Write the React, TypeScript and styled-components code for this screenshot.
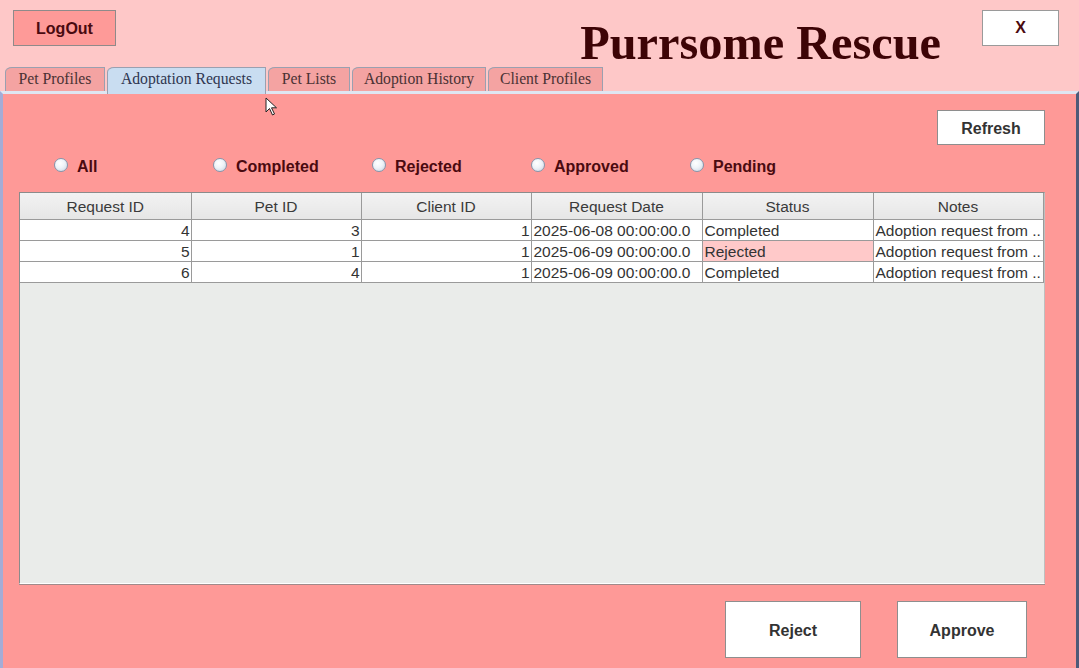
import React from "react";
import styled, { createGlobalStyle } from "styled-components";

const Global = createGlobalStyle`
  html, body { margin: 0; padding: 0; }
  body { width: 1079px; height: 668px; overflow: hidden; background: #fec8c8; font-family: "Liberation Sans", Arial, sans-serif; }
  #root { width: 1079px; height: 668px; }
`;

const Frame = styled.div`
  position: relative;
  width: 1079px;
  height: 668px;
  display: flex;
  flex-direction: column;
  background: #fec8c8;
`;

const Header = styled.div`
  height: 67px;
  box-sizing: border-box;
  display: flex;
  align-items: flex-start;
  padding: 10px 20px 0 13px;
`;

const LogOutButton = styled.button`
  width: 103px;
  height: 36px;
  background: #fe9a98;
  border: 1px solid #8f8a8a;
  font: bold 16px "Liberation Sans", Arial, sans-serif;
  color: #4a0a10;
  padding: 2px 0 0 0;
`;

const Title = styled.h1`
  margin: 7px 41px 0 auto;
  font: bold 48.3px/52px "Liberation Serif", "Times New Roman", serif;
  color: #3d0406;
  white-space: nowrap;
`;

const CloseButton = styled.button`
  width: 77px;
  height: 36px;
  background: #ffffff;
  border: 1px solid #9a9a9a;
  font: bold 16px "Liberation Sans", Arial, sans-serif;
  color: #4a0a10;
  padding: 0;
`;

const TabStrip = styled.div`
  height: 24px;
  display: flex;
  align-items: flex-end;
  gap: 2px;
  padding-left: 5px;
`;

const Tab = styled.div<{ $active?: boolean; $w: number }>`
  width: ${(p) => p.$w}px;
  height: ${(p) => (p.$active ? 27 : 24)}px;
  margin-bottom: ${(p) => (p.$active ? -3 : 0)}px;
  box-sizing: border-box;
  background: ${(p) => (p.$active ? "#c9ddf1" : "#f4a3a2")};
  border: 1px solid #9aa0b0;
  border-bottom: none;
  border-top-left-radius: 7px 5px;
  display: flex;
  align-items: flex-start;
  justify-content: center;
  padding-top: 2px;
  font: 15.7px "Liberation Serif", "Times New Roman", serif;
  color: ${(p) => (p.$active ? "#2f3650" : "#4a3234")};
  white-space: nowrap;
  position: relative;
  z-index: ${(p) => (p.$active ? 2 : 1)};
`;

const Panel = styled.div`
  flex: 1;
  display: flex;
  flex-direction: column;
  background: #fe9997;
  border-top: 3px solid #dfe6f2;
  border-left: 3px solid #a4acd6;
  border-right: 3px solid #4e5a78;
  padding: 16px 31px 0 16px;
`;

const TopRow = styled.div`
  display: flex;
  justify-content: flex-end;
`;

const WhiteButton = styled.button<{ $w: number; $h: number }>`
  width: ${(p) => p.$w}px;
  height: ${(p) => p.$h}px;
  background: #ffffff;
  border: 1px solid #8e8e8e;
  font: bold 16px "Liberation Sans", Arial, sans-serif;
  color: #333333;
  padding: 2px 0 0 0;
`;

const RadioRow = styled.div`
  display: flex;
  height: 20px;
  margin: 12px 0 15px 0;
  padding-left: 35px;
  align-items: center;
`;

const RadioItem = styled.label`
  width: 159px;
  display: flex;
  align-items: center;
  gap: 9px;
  font: bold 16px "Liberation Sans", Arial, sans-serif;
  color: #4a0a10;
`;

const RadioDot = styled.span`
  width: 14px;
  height: 14px;
  box-sizing: border-box;
  border-radius: 50%;
  border: 1px solid #8596ac;
  background: radial-gradient(circle at 40% 35%, #ffffff 0%, #eef3f8 45%, #c5d2e0 100%);
  margin-top: -4px;
`;

const TableBox = styled.div`
  height: 392px;
  box-sizing: border-box;
  background: #eaecea;
  border: 1px solid #8b8b8b;
  border-right-color: #bfbfbf;
  border-bottom-color: #ffffff;
  box-shadow: 0 1px 0 #a08a8a;
  overflow: hidden;
`;

const Grid = styled.table`
  width: 1023px;
  border-collapse: collapse;
  table-layout: fixed;
  font: 15.5px "Liberation Sans", Arial, sans-serif;
  color: #333333;
`;

const Th = styled.th`
  height: 25px;
  padding: 1px 0 0 0;
  font-weight: normal;
  text-align: center;
  background: linear-gradient(#f2f2f2, #e6e6e6);
  border-right: 1px solid #9a9a9a;
  border-bottom: 1px solid #9a9a9a;
  color: #3a3a3a;
`;

const Td = styled.td<{ $align?: string; $hl?: boolean }>`
  height: 18px;
  padding: 2px 1px 0 2px;
  background: ${(p) => (p.$hl ? "#ffc9c9" : "#ffffff")};
  border-right: 1px solid #9a9a9a;
  border-bottom: 1px solid #9a9a9a;
  text-align: ${(p) => p.$align || "left"};
  white-space: nowrap;
  overflow: hidden;
  line-height: 18px;
`;

const BottomRow = styled.div`
  display: flex;
  justify-content: flex-end;
  gap: 36px;
  margin: 17px 18px 0 0;
`;

const Cursor = styled.svg`
  position: absolute;
  left: 265px;
  top: 97px;
`;

const rows = [
  { id: 4, pet: 3, client: 1, date: "2025-06-08 00:00:00.0", status: "Completed" },
  { id: 5, pet: 1, client: 1, date: "2025-06-09 00:00:00.0", status: "Rejected" },
  { id: 6, pet: 4, client: 1, date: "2025-06-09 00:00:00.0", status: "Completed" },
];

const tabs = [
  { label: "Pet Profiles", w: 100 },
  { label: "Adoptation Requests", w: 159, active: true },
  { label: "Pet Lists", w: 82 },
  { label: "Adoption History", w: 134 },
  { label: "Client Profiles", w: 115 },
];

const radios = ["All", "Completed", "Rejected", "Approved", "Pending"];
const cols = ["Request ID", "Pet ID", "Client ID", "Request Date", "Status", "Notes"];

export default function App() {
  return (
    <Frame>
      <Global />
      <Header>
        <LogOutButton>LogOut</LogOutButton>
        <Title>Purrsome Rescue</Title>
        <CloseButton>X</CloseButton>
      </Header>
      <TabStrip>
        {tabs.map((t) => (
          <Tab key={t.label} $w={t.w} $active={t.active}>
            {t.label}
          </Tab>
        ))}
      </TabStrip>
      <Panel>
        <TopRow>
          <WhiteButton $w={108} $h={35}>Refresh</WhiteButton>
        </TopRow>
        <RadioRow>
          {radios.map((r) => (
            <RadioItem key={r}>
              <RadioDot />
              {r}
            </RadioItem>
          ))}
        </RadioRow>
        <TableBox>
          <Grid>
            <colgroup>
              <col style={{ width: 171 }} />
              <col style={{ width: 170 }} />
              <col style={{ width: 170 }} />
              <col style={{ width: 171 }} />
              <col style={{ width: 171 }} />
              <col style={{ width: 170 }} />
            </colgroup>
            <thead>
              <tr>
                {cols.map((c) => (
                  <Th key={c}>{c}</Th>
                ))}
              </tr>
            </thead>
            <tbody>
              {rows.map((r) => (
                <tr key={r.id}>
                  <Td $align="right">{r.id}</Td>
                  <Td $align="right">{r.pet}</Td>
                  <Td $align="right">{r.client}</Td>
                  <Td>{r.date}</Td>
                  <Td $hl={r.status === "Rejected"}>{r.status}</Td>
                  <Td>Adoption request from ..</Td>
                </tr>
              ))}
            </tbody>
          </Grid>
        </TableBox>
        <BottomRow>
          <WhiteButton $w={136} $h={57}>Reject</WhiteButton>
          <WhiteButton $w={130} $h={57}>Approve</WhiteButton>
        </BottomRow>
      </Panel>
      <Cursor width="14" height="20" viewBox="0 0 14 20">
        <path d="M1 1 L1 15 L4.5 11.5 L7.5 18 L9.5 17 L6.5 10.8 L11.5 10.8 Z" fill="#ffffff" stroke="#222" strokeWidth="1" strokeLinejoin="round" />
      </Cursor>
    </Frame>
  );
}
